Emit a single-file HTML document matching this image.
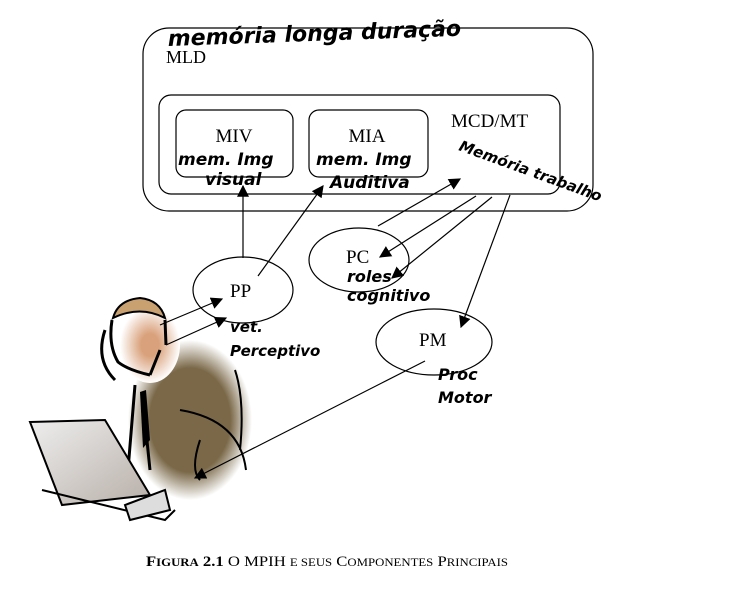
<!DOCTYPE html>
<html><head><meta charset="utf-8"><style>
body{margin:0;background:#fff;width:752px;height:610px;overflow:hidden}
svg{display:block}
.s{font-family:"Liberation Serif",serif;fill:#000}
.h{font-family:"DejaVu Sans","Liberation Sans",sans-serif;font-weight:bold;font-style:italic;fill:#000}
</style></head><body>
<svg width="752" height="610" viewBox="0 0 752 610">
<defs>
<marker id="a" markerWidth="10" markerHeight="10" refX="9" refY="5" orient="auto"><path d="M0,0L10,5L0,10z" fill="#000"/></marker>
<radialGradient id="g" cx="0.5" cy="0.5" r="0.5"><stop offset="0.65" stop-color="#7a6848"/><stop offset="1" stop-color="#fff"/></radialGradient>
<radialGradient id="f" cx="0.5" cy="0.5" r="0.5"><stop offset="0.3" stop-color="#d9a27c"/><stop offset="1" stop-color="#fff"/></radialGradient>
<linearGradient id="l" x1="0" y1="0" x2="1" y2="1"><stop offset="0" stop-color="#eee"/><stop offset="1" stop-color="#b8afa8"/></linearGradient>
</defs>
<ellipse cx="190" cy="420" rx="62" ry="80" fill="url(#g)"/>
<ellipse cx="150" cy="345" rx="30" ry="38" fill="url(#f)"/>
<path d="M113,318 Q118,300 140,298 Q160,300 165,318 Q140,305 113,318 Z" fill="#c9a070" stroke="#000" stroke-width="2"/>
<path d="M112,320 Q108,345 118,362 Q128,370 150,375 M165,320 L166,345 M150,375 L160,350 M135,385 L128,470 M142,392 L150,470 M105,330 Q95,360 115,380" fill="none" stroke="#000" stroke-width="3"/>
<path d="M140,392 L146,390 L150,440 L143,448 Z" fill="#000"/>
<path d="M180,410 Q240,420 246,470 M200,440 Q190,470 200,480 M235,370 Q245,400 240,450" fill="none" stroke="#000" stroke-width="2"/>
<path d="M30,422 L105,420 L150,495 L62,505 Z" fill="url(#l)" stroke="#000" stroke-width="2"/>
<path d="M42,490 L165,520 L175,510" fill="none" stroke="#000" stroke-width="2"/>
<path d="M125,505 L165,490 L170,510 L130,520 Z" fill="#ddd" stroke="#000" stroke-width="2"/>
<g fill="none" stroke="#000" stroke-width="1.2">
<rect x="143" y="28" width="450" height="183" rx="26"/>
<rect x="159" y="95" width="401" height="99" rx="12"/>
<rect x="176" y="110" width="117" height="67" rx="10"/>
<rect x="309" y="110" width="119" height="67" rx="10"/>
<ellipse cx="359" cy="260" rx="50" ry="32"/>
<ellipse cx="243" cy="290" rx="50" ry="33"/>
<ellipse cx="434" cy="342" rx="58" ry="33"/>
<line x1="243" y1="258" x2="243" y2="186" marker-end="url(#a)"/>
<line x1="258" y1="276" x2="323" y2="186" marker-end="url(#a)"/>
<line x1="378" y1="226" x2="460" y2="179" marker-end="url(#a)"/>
<line x1="476" y1="196" x2="380" y2="257" marker-end="url(#a)"/>
<line x1="492" y1="197" x2="392" y2="278" marker-end="url(#a)"/>
<line x1="510" y1="195" x2="461" y2="327" marker-end="url(#a)"/>
<line x1="425" y1="361" x2="195" y2="478" marker-end="url(#a)"/>
<line x1="160" y1="325" x2="222" y2="299" marker-end="url(#a)"/>
<line x1="166" y1="345" x2="226" y2="318" marker-end="url(#a)"/>
</g>
<text class="s" x="166" y="63" font-size="18">MLD</text>
<text class="s" x="234" y="142" font-size="19" text-anchor="middle">MIV</text>
<text class="s" x="367" y="142" font-size="19" text-anchor="middle">MIA</text>
<text class="s" x="451" y="127" font-size="19">MCD/MT</text>
<text class="s" x="346" y="263" font-size="19">PC</text>
<text class="s" x="230" y="297" font-size="19">PP</text>
<text class="s" x="419" y="346" font-size="19">PM</text>
<text class="h" x="168" y="46" font-size="22" transform="rotate(-2 168 46)">memória longa duração</text>
<text class="h" x="178" y="165" font-size="17">mem. Img</text>
<text class="h" x="205" y="185" font-size="17">visual</text>
<text class="h" x="316" y="165" font-size="17">mem. Img</text>
<text class="h" x="330" y="188" font-size="17">Auditiva</text>
<text class="h" x="458" y="150" font-size="15" transform="rotate(20 458 150)">Memória trabalho</text>
<text class="h" x="347" y="282" font-size="16">roles</text>
<text class="h" x="347" y="301" font-size="16">cognitivo</text>
<text class="h" x="230" y="332" font-size="15">vet.</text>
<text class="h" x="230" y="356" font-size="15">Perceptivo</text>
<text class="h" x="438" y="380" font-size="16">Proc</text>
<text class="h" x="438" y="403" font-size="16">Motor</text>
<text class="s" x="146" y="566" font-size="15" textLength="362" lengthAdjust="spacingAndGlyphs"><tspan font-weight="bold">F<tspan font-size="11.5">IGURA</tspan> 2.1</tspan> O MPIH <tspan font-size="11.5">E SEUS</tspan> C<tspan font-size="11.5">OMPONENTES</tspan> P<tspan font-size="11.5">RINCIPAIS</tspan></text>
</svg>
</body></html>
